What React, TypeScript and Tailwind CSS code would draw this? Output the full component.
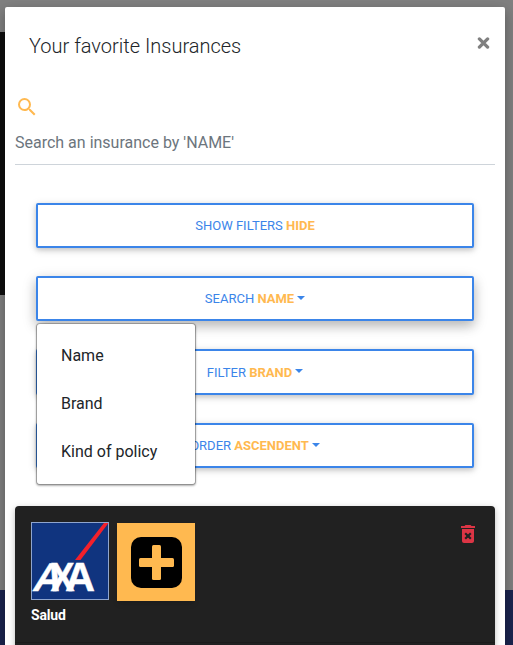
import React from "react";

function Caret() {
  return <span className="mb-[2px] ml-[3px] h-0 w-0 border-x-4 border-t-4 border-x-transparent border-t-[#3b85e9]" />;
}

type ActionProps = { label: string; value: string; caret?: boolean; className: string };

function ActionButton({ label, value, caret = false, className }: ActionProps) {
  return (
    <button className={`flex w-[438px] items-center justify-center rounded-[2px] border-2 border-[#3b85e9] bg-white text-[13px] leading-[19px] text-[#3b85e9] ${className}`}>
      <span className="whitespace-pre">{label} <b className="font-bold text-[#ffb950]">{value}</b></span>
      {caret && <Caret />}
    </button>
  );
}

function AxaLogo() {
  return (
    <svg width="78" height="78" viewBox="0 0 78 78" className="block overflow-visible">
      <rect x="0.5" y="0.5" width="77" height="77" fill="#10347f" stroke="#8fa5ce" />
      <path d="M73 1H77.5L49.5 38H44Z" fill="#f3202b" />
      <g fill="#fff" stroke="#fff" strokeWidth="0.5" fontFamily="Liberation Sans, Arial, sans-serif" fontWeight="700" fontSize="40">
        <text transform="translate(0.5 69) skewX(-15)" textLength="28" lengthAdjust="spacingAndGlyphs">A</text>
        <text transform="translate(19.5 69)" textLength="24" lengthAdjust="spacingAndGlyphs">X</text>
        <text transform="translate(34 69)" textLength="30" lengthAdjust="spacingAndGlyphs">A</text>
      </g>
    </svg>
  );
}

const options = ["Name", "Brand", "Kind of policy"];

export default function App() {
  return (
    <main className="relative h-[645px] w-[513px] overflow-hidden bg-[#808080] font-[Roboto,sans-serif]">
      <div className="absolute inset-0 flex flex-col">
        <div className="h-8" />
        <div className="h-[263px] w-[100px] bg-[#0e0e0e]" />
        <div className="h-[295px]" />
        <div className="h-[55px] bg-[#1b244f]" />
      </div>

      <section className="relative mt-[7px] mr-2 ml-[5px] flex w-[500px] flex-col rounded-[2px] bg-white shadow-[0_5px_11px_0_rgba(0,0,0,0.18),0_4px_15px_0_rgba(0,0,0,0.15)]">
        <header className="flex h-[88px] shrink-0 items-start justify-between pt-[23px] pr-[15px] pl-6">
          <h1 className="text-xl leading-8 font-light text-[#212529]">Your favorite Insurances</h1>
          <button aria-label="Close" className="mt-[7px] block">
            <svg width="13" height="12" viewBox="0 0 13 12" className="block"><path d="M2.4 1.9L10.6 10.1M10.6 1.9L2.4 10.1" stroke="#808080" strokeWidth="3.3" strokeLinecap="round" /></svg>
          </button>
        </header>

        <div className="mx-[10px] h-[70px] shrink-0 border-b border-[#ced4da]">
          <svg width="24" height="24" viewBox="0 0 24 24" fill="#ffb950" className="block">
            <path d="M15.5 14h-.79l-.28-.27A6.47 6.47 0 0 0 16 9.5 6.5 6.5 0 1 0 9.5 16c1.61 0 3.09-.59 4.23-1.57l.27.28v.79l5 4.99L20.49 19zm-6 0C7.01 14 5 11.99 5 9.5S7.01 5 9.5 5 14 7.01 14 9.5 11.99 14 9.5 14z" />
          </svg>
          <p className="mt-3 text-base leading-6 text-[#6c757d]">Search an insurance by 'NAME'</p>
        </div>

        <div className="relative flex flex-col pt-[38px] pl-[31px]">
          <ActionButton label="SHOW FILTERS" value="HIDE" className="h-[45px] shadow-[0_2px_5px_0_rgba(0,0,0,0.16),0_2px_10px_0_rgba(0,0,0,0.12)]" />
          <ActionButton label="SEARCH" value="NAME" caret className="mt-7 h-[45px] shadow-[0_5px_11px_0_rgba(0,0,0,0.18),0_4px_15px_0_rgba(0,0,0,0.15)]" />
          <ActionButton label="FILTER" value="BRAND" caret className="mt-7 h-[46px] shadow-[0_2px_5px_0_rgba(0,0,0,0.16),0_2px_10px_0_rgba(0,0,0,0.12)]" />
          <ActionButton label="ORDER" value="ASCENDENT" caret className="mt-7 h-[45px] shadow-[0_2px_5px_0_rgba(0,0,0,0.16),0_2px_10px_0_rgba(0,0,0,0.12)]" />
          <div className="absolute top-[158px] left-[31px] flex h-[162px] w-[160px] flex-col rounded border border-black/20 bg-white bg-clip-padding pt-2 shadow-[0_1px_2px_rgba(0,0,0,0.3)]">
            {options.map((option) => (
              <button key={option} className="h-12 pl-6 text-left text-base leading-6 text-[#212529]">{option}</button>
            ))}
          </div>
        </div>

        <article className="mx-[10px] mt-[38px] flex h-[180px] shrink-0 flex-col rounded-t bg-[#212121] pt-4 pr-[15px] pl-4 shadow-[0_2px_5px_0_rgba(0,0,0,0.16),0_2px_10px_0_rgba(0,0,0,0.12)]">
          <div className="flex items-start">
            <AxaLogo />
            <button aria-label="Add insurance" className="mt-px ml-2 flex h-[78px] w-[78px] items-center justify-center bg-[#ffb950] shadow-md">
              <span className="flex h-[51px] w-[51px] items-center justify-center rounded-[10px] bg-black">
                <svg width="35" height="35" viewBox="0 0 35 35" fill="#ffb950"><rect x="13" y="0" width="9" height="35" rx="1.5" /><rect x="0" y="13" width="35" height="9" rx="1.5" /></svg>
              </span>
            </button>
            <button aria-label="Delete insurance" className="ml-auto">
              <svg width="24" height="24" viewBox="0 0 24 24" fill="#dc3545" className="block">
                <path d="M15.5 4l-1-1h-5l-1 1H5v2h14V4zM6 7v12c0 1.1.9 2 2 2h8c1.1 0 2-.9 2-2V7z" />
                <path d="M9.2 11.2l5.6 5.6M14.8 11.2l-5.6 5.6" stroke="#212121" strokeWidth="2.2" />
              </svg>
            </button>
          </div>
          <p className="mt-1 text-sm leading-[21px] font-bold tracking-[-0.15px] text-white">Salud</p>
          <div className="mt-[16px] h-px shrink-0 -ml-4 -mr-[15px] bg-[#1b1b1b]" />
        </article>
      </section>
    </main>
  );
}
